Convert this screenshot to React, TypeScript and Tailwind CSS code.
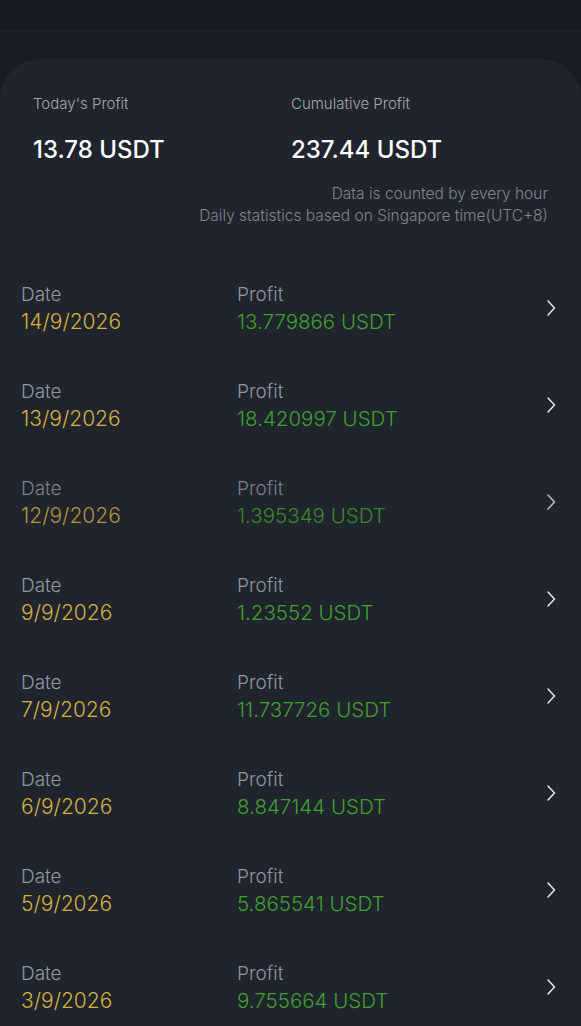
import React from "react";

const rows = [
  { d: "14/9/2026", p: "13.779866 USDT" },
  { d: "13/9/2026", p: "18.420997 USDT" },
  { d: "12/9/2026", p: "1.395349 USDT", dim: true },
  { d: "9/9/2026", p: "1.23552 USDT" },
  { d: "7/9/2026", p: "11.737726 USDT" },
  { d: "6/9/2026", p: "8.847144 USDT" },
  { d: "5/9/2026", p: "5.865541 USDT" },
  { d: "3/9/2026", p: "9.755664 USDT" },
];

function Chevron() {
  return (
    <svg width="12" height="20" viewBox="0 0 12 20" fill="none">
      <path d="M3 3 L9.5 10 L3 17" stroke="#e6e8ec" strokeWidth="1.5" strokeLinecap="round" strokeLinejoin="round" />
    </svg>
  );
}

export default function App() {
  return (
    <div className="w-[581px] h-[1026px] overflow-hidden bg-[#181d25]" style={{ fontFamily: "Inter, Roboto, sans-serif" }}>
      <div className="h-[31px] bg-[#161b22] border-b border-[#1e242c]" />
      <div className="h-[28px]" />
      <div className="bg-[#1f242d] rounded-t-[40px] min-h-[1000px]">
        <div className="pt-[35px] px-[33px] flex">
          <div className="w-[258px]">
            <div className="text-[15px] leading-[20px] font-light text-[#a3a8b0]">Today's Profit</div>
            <div className="mt-[21px] text-[24px] leading-[30px] font-medium text-white">13.78 USDT</div>
          </div>
          <div>
            <div className="text-[15px] leading-[20px] font-light text-[#a3a8b0]">Cumulative Profit</div>
            <div className="mt-[21px] text-[24px] leading-[30px] font-medium text-white">237.44 USDT</div>
          </div>
        </div>
        <div className="pr-[33px] mt-[18px] text-right text-[15.5px] leading-[22px] font-light text-[#80858e]">
          <div>Data is counted by every hour</div>
          <div>Daily statistics based on Singapore time(UTC+8)</div>
        </div>
        <div className="mt-[32px]">
          {rows.map((r) => (
            <div key={r.d} className={"h-[97px] flex items-center pl-[21px] pr-[24px] " + (r.dim ? "opacity-80" : "")}>
              <div className="w-[216px] mt-[1px]">
                <div className="text-[19px] leading-[27px] font-light text-[#9196a0]">Date</div>
                <div className="text-[21px] leading-[27px] font-light text-[#d8b13c]">{r.d}</div>
              </div>
              <div className="flex-1 mt-[1px]">
                <div className="text-[19px] leading-[27px] font-light text-[#9196a0]">Profit</div>
                <div className="text-[20.5px] leading-[27px] font-light text-[#3fa02c]">{r.p}</div>
              </div>
              <Chevron />
            </div>
          ))}
        </div>
      </div>
    </div>
  );
}
